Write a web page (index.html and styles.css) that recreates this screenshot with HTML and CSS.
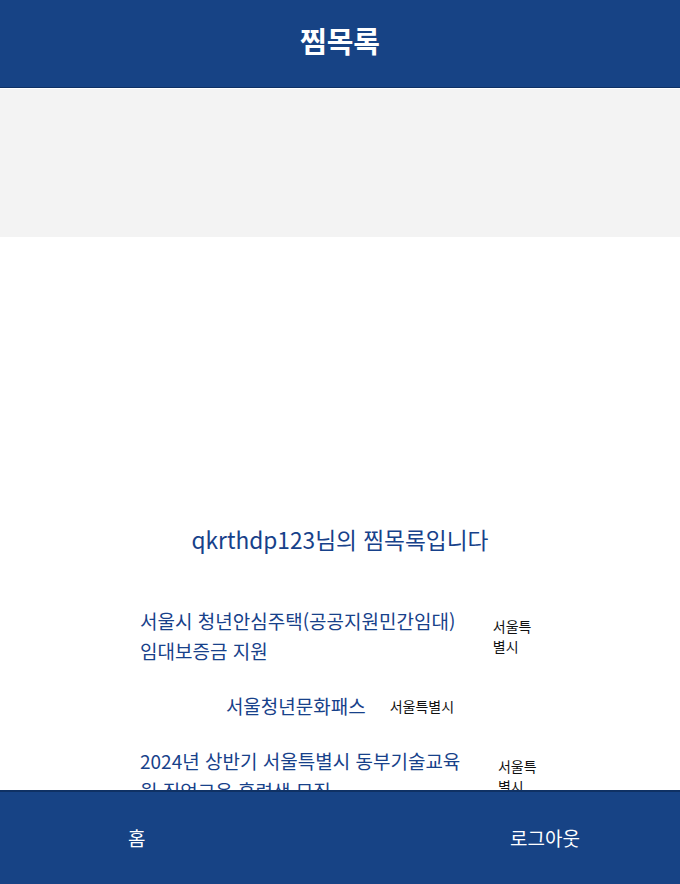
FILE: index.html
```html
<!DOCTYPE html>
<html lang="ko">
<head>
<meta charset="utf-8">
<title>찜목록</title>
<link rel="stylesheet" href="styles.css">
</head>
<body>
<header class="topbar">
  <h1 class="topbar-title">찜목록</h1>
</header>
<div class="banner"></div>
<main class="content">
  <h2 class="welcome">qkrthdp123님의 찜목록입니다</h2>
  <ul class="wish-list">
    <li class="wish-item">
      <span class="wish-title">서울시 청년안심주택(공공지원민간임대) 임대보증금 지원</span>
      <span class="wish-region">서울특별시</span>
    </li>
    <li class="wish-item">
      <span class="wish-title">서울청년문화패스</span>
      <span class="wish-region">서울특별시</span>
    </li>
    <li class="wish-item">
      <span class="wish-title">2024년 상반기 서울특별시 동부기술교육원 직업교육 훈련생 모집</span>
      <span class="wish-region">서울특별시</span>
    </li>
  </ul>
</main>
<nav class="bottombar">
  <a class="nav-link" href="#">홈</a>
  <a class="nav-link" href="#">로그아웃</a>
</nav>
</body>
</html>
```
FILE: styles.css
```css
* { box-sizing: border-box; }
html, body {
  margin: 0;
  padding: 0;
  background: #ffffff;
  font-family: "Noto Sans CJK KR", "Noto Sans", sans-serif;
}
.topbar {
  height: 88px;
  background: #174385;
  border-bottom: 1px solid #0f3164;
  display: flex;
  align-items: center;
  justify-content: center;
}
.topbar-title {
  margin: 0 0 7px;
  color: #ffffff;
  font-size: 29px;
  font-weight: 700;
  line-height: 38px;
}
.banner {
  height: 149px;
  background: #f3f3f3;
  border-top: 1px solid #ffffff;
}
.content {
  padding: 287px 0 120px;
}
.welcome {
  margin: 0;
  text-align: center;
  color: #17418a;
  font-size: 22.7px;
  font-weight: 400;
  line-height: 32px;
}
.wish-list {
  list-style: none;
  margin: 50px auto 0;
  padding: 0;
  width: 400px;
  display: flex;
  flex-direction: column;
  gap: 25px;
}
.wish-item {
  display: flex;
  justify-content: center;
  align-items: center;
  gap: 24px;
}
.wish-title {
  color: #17418a;
  font-size: 19px;
  line-height: 30px;
}
.wish-region {
  color: #111111;
  font-size: 14px;
  line-height: 20px;
}
.bottombar {
  position: fixed;
  left: 0;
  right: 0;
  bottom: 0;
  height: 94px;
  background: #174385;
  border-top: 2px solid #0f3164;
  display: flex;
  align-items: center;
  justify-content: space-between;
  padding: 0 100px 0 128px;
}
.nav-link {
  color: #ffffff;
  text-decoration: none;
  font-size: 19px;
  line-height: 26px;
}
```
